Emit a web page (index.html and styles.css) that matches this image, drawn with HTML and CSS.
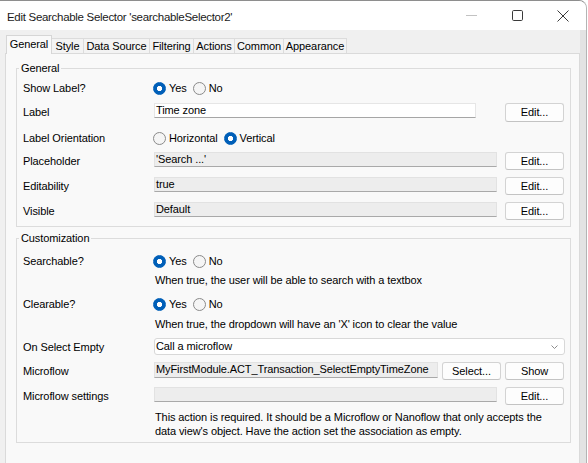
FILE: index.html
```html
<!DOCTYPE html>
<html>
<head>
<meta charset="utf-8">
<title>Edit Searchable Selector</title>
<link rel="stylesheet" href="styles.css">
</head>
<body>
<div class="window">
  <div class="titlebar">
    <div class="title">Edit Searchable Selector 'searchableSelector2'</div>
    <div class="controls">
      <div class="ctl"><svg width="11" height="11" viewBox="0 0 11 11"><path d="M0 5.5h11" stroke="#c2c2c2" stroke-width="1"/></svg></div>
      <div class="ctl"><svg width="11" height="11" viewBox="0 0 11 11"><rect x="0.5" y="0.5" width="10" height="10" rx="1.2" fill="none" stroke="#3a3a3a" stroke-width="1"/></svg></div>
      <div class="ctl"><svg width="12" height="12" viewBox="0 0 12 12"><path d="M0.5 0.5L11.5 11.5M11.5 0.5L0.5 11.5" fill="none" stroke="#3a3a3a" stroke-width="1"/></svg></div>
    </div>
  </div>
  <div class="main">
    <div class="tabs">
      <div class="tab active t-general">General</div>
      <div class="tab t-style">Style</div>
      <div class="tab t-data">Data Source</div>
      <div class="tab t-filter">Filtering</div>
      <div class="tab t-actions">Actions</div>
      <div class="tab t-common">Common</div>
      <div class="tab t-appear">Appearance</div>
    </div>
    <div class="panel">
      <fieldset class="group g-general">
        <legend>General</legend>
        <div class="row">
          <div class="lbl">Show Label?</div>
          <div class="ctrl radios"><span class="radio on"></span><span class="rl">Yes</span><span class="radio"></span><span class="rl">No</span></div>
        </div>
        <div class="row r-label">
          <div class="lbl">Label</div>
          <div class="ctrl"><div class="field edit short">Time zone</div></div>
          <div class="btn">Edit...</div>
        </div>
        <div class="row r-orient">
          <div class="lbl">Label Orientation</div>
          <div class="ctrl radios"><span class="radio"></span><span class="rl">Horizontal</span><span class="radio on"></span><span class="rl">Vertical</span></div>
        </div>
        <div class="row r-place">
          <div class="lbl">Placeholder</div>
          <div class="ctrl"><div class="field">'Search ...'</div></div>
          <div class="btn">Edit...</div>
        </div>
        <div class="row r-std">
          <div class="lbl">Editability</div>
          <div class="ctrl"><div class="field">true</div></div>
          <div class="btn">Edit...</div>
        </div>
        <div class="row r-std">
          <div class="lbl">Visible</div>
          <div class="ctrl"><div class="field">Default</div></div>
          <div class="btn">Edit...</div>
        </div>
      </fieldset>

      <fieldset class="group g-custom">
        <legend>Customization</legend>
        <div class="row">
          <div class="lbl">Searchable?</div>
          <div class="ctrl radios"><span class="radio on"></span><span class="rl">Yes</span><span class="radio"></span><span class="rl">No</span></div>
        </div>
        <div class="help h1">When true, the user will be able to search with a textbox</div>
        <div class="row r-clear">
          <div class="lbl">Clearable?</div>
          <div class="ctrl radios"><span class="radio on"></span><span class="rl">Yes</span><span class="radio"></span><span class="rl">No</span></div>
        </div>
        <div class="help h2">When true, the dropdown will have an 'X' icon to clear the value</div>
        <div class="row r-select">
          <div class="lbl">On Select Empty</div>
          <div class="dropdown"><span class="dd-text">Call a microflow</span><svg width="7" height="4" viewBox="0 0 7 4"><path d="M0.5 0.5l3 3 3-3" fill="none" stroke="#8c8c8c" stroke-width="1"/></svg></div>
        </div>
        <div class="row r-mf">
          <div class="lbl">Microflow</div>
          <div class="field mf">MyFirstModule.ACT_Transaction_SelectEmptyTimeZone</div>
          <div class="btn b-select">Select...</div>
          <div class="btn b-show">Show</div>
        </div>
        <div class="row r-std">
          <div class="lbl">Microflow settings</div>
          <div class="ctrl"><div class="field"></div></div>
          <div class="btn">Edit...</div>
        </div>
        <div class="help h3">This action is required. It should be a Microflow or Nanoflow that only accepts the<br>data view's object. Have the action set the association as empty.</div>
      </fieldset>
    </div>
  </div>
</div>
</body>
</html>
```

FILE: styles.css
```css
* { box-sizing: border-box; }
html, body { margin: 0; padding: 0; background: #ffffff; }
body {
  font-family: "Liberation Sans", Arial, sans-serif;
  font-size: 11px;
  letter-spacing: -0.1px;
  color: #000;
}

.window {
  width: 587px;
  height: 463px;
  border-top: 1px solid #8e8e8e;
  border-right: 1px solid #b4b4b4;
  border-top-right-radius: 8px;
  overflow: hidden;
  display: flex;
  flex-direction: column;
  background: #f0f0f0;
}

/* title bar */
.titlebar {
  height: 29px;
  flex: none;
  background: #ffffff;
  display: flex;
  align-items: center;
}
.title {
  flex: 1;
  padding: 2px 0 0 7px;
  font-size: 11.5px;
  letter-spacing: -0.3px;
  color: #1a1a1a;
  white-space: nowrap;
}
.controls { display: flex; height: 100%; }
.ctl {
  width: 46px;
  height: 100%;
  display: flex;
  align-items: center;
  justify-content: center;
}

/* main area */
.main {
  flex: 1;
  min-height: 0;
  display: flex;
  flex-direction: column;
  padding-left: 5px;
  border-right: 6px solid #e3e3e3;
}

.tabs {
  height: 23px;
  flex: none;
  display: flex;
  align-items: flex-end;
  padding-left: 1px;
}
.tab {
  height: 15px;
  line-height: 13px;
  padding-top: 1px;
  text-align: center;
  white-space: nowrap;
  background: #f3f3f3;
  border-top: 1px solid #dcdcdc;
  border-right: 1px solid #dcdcdc;
}
.tab.active {
  height: 19px;
  margin-bottom: -1px;
  padding-top: 2px;
  background: #f9f9f9;
  border: 1px solid #d6d6d6;
  border-bottom: none;
  position: relative;
  z-index: 1;
}
.t-general { width: 46px; }
.t-style { width: 32px; }
.t-data { width: 66px; }
.t-filter { width: 44px; }
.t-actions { width: 41px; }
.t-common { width: 49px; }
.t-appear { width: 63px; }

.panel {
  flex: 1;
  background: #f9f9f9;
  border: 1px solid #dadada;
  border-bottom: none;
  padding: 7px 8px 0 10px;
}

/* group boxes */
.group {
  margin: 0;
  min-width: 0;
  border: 1px solid #dcdcdc;
  padding: 4px 6px 6px 6px;
}
.group legend {
  padding: 0 2px;
  margin-left: -4px;
  line-height: 14px;
}
.g-custom {
  margin-top: 4px;
  padding-top: 7px;
  padding-bottom: 4px;
}

/* rows */
.row {
  display: flex;
  align-items: center;
  height: 18px;
}
.lbl {
  width: 131px;
  flex: none;
  line-height: 13px;
  white-space: nowrap;
}
.ctrl {
  width: 343px;
  flex: none;
  height: 100%;
  display: flex;
  align-items: flex-start;
}
.ctrl.radios { align-items: center; }

.r-label { margin-top: 6px; }
.r-orient { margin-top: 8px; }
.r-place { margin-top: 5px; }
.r-std { margin-top: 7px; }
.r-clear { margin-top: 8px; }
.r-select { margin-top: 7px; }
.r-mf { margin-top: 6px; }

/* radios */
.radio {
  width: 13px;
  height: 13px;
  flex: none;
  border-radius: 50%;
  border: 1px solid #8a8a8a;
  background: #f5f5f5;
}
.radio:first-child { margin-left: -1px; }
.radio.on {
  border-color: #005fb8;
  background: radial-gradient(circle, #ffffff 0 2.4px, #005fb8 2.9px);
}
.rl {
  margin: 0 6px 0 3px;
  line-height: 13px;
  white-space: nowrap;
}

/* inputs */
.field {
  height: 15px;
  width: 100%;
  line-height: 13px;
  padding-left: 1px;
  background: #ededed;
  border: 1px solid #e2e2e2;
  border-bottom-color: #a9a9a9;
  white-space: nowrap;
  overflow: hidden;
}
.field.edit {
  background: #ffffff;
  border-color: #e6e6e6;
  border-bottom-color: #a6a6a6;
}
.field.short { width: 322px; }
.field.mf {
  width: 284px;
  flex: none;
  align-self: flex-start;
  height: 16px;
}

.btn {
  width: 59px;
  height: 18px;
  flex: none;
  margin-left: 8px;
  align-self: flex-start;
  background: #fdfdfd;
  border: 1px solid #d3d3d3;
  border-bottom-color: #c3c3c3;
  border-radius: 3px;
  text-align: center;
  line-height: 16px;
  white-space: nowrap;
}
.r-label .btn { height: 19px; line-height: 17px; }
.b-select, .b-show { margin-left: 4px; }

.dropdown {
  width: 411px;
  height: 17px;
  flex: none;
  align-self: flex-start;
  display: flex;
  align-items: center;
  justify-content: space-between;
  background: #ffffff;
  border: 1px solid #d8d8d8;
  border-radius: 3px;
  padding: 0 6px 0 1px;
}
.dd-text { line-height: 13px; }

/* help text */
.help {
  margin-left: 132px;
  line-height: 14px;
  white-space: nowrap;
}
.h1 { margin-top: 3px; }
.h2 { margin-top: 4px; }
.h3 { margin-top: 5px; }
```
